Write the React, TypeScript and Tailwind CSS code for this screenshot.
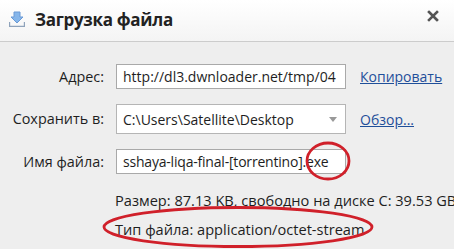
import React from "react";

export default function App() {
  const font = { fontFamily: '"Open Sans", "Noto Sans", sans-serif' };
  return (
    <div className="relative w-[454px] h-[249px] overflow-hidden bg-[#eeeeee] text-[#1e1e1e]" style={font}>
      <div className="h-[42px] flex items-center border-b border-[#cccccc] bg-gradient-to-b from-[#ffffff] to-[#f4f4f4]">
        <svg width="16" height="16" viewBox="0 0 16 16" className="ml-[9px] mt-[-4px]">
          <path d="M5 1h6v5h3l-6 6-6-6h3z" fill="#86b6ea" stroke="#6a9ad6" strokeWidth="1" />
          <path d="M0.5 11v4.5h15V11" fill="none" stroke="#8fa3bb" strokeWidth="1.4" />
        </svg>
        <div className="ml-[10px] mt-[-2px] text-[17px] font-bold text-[#222] tracking-[-0.3px]">Загрузка файла</div>
        <svg width="12" height="12" viewBox="0 0 12 12" className="ml-auto mr-[15px] mt-[-9px]">
          <path d="M2 2L10 10M10 2L2 10" stroke="#555" strokeWidth="2.6" strokeLinecap="square" />
        </svg>
      </div>
      <div className="grid grid-cols-[104px_230px_auto] gap-x-[12px] items-center pt-[22px] text-[14.4px]">
        <div className="text-right">Адрес:</div>
        <div className="h-[25px] bg-white border border-[#a9a9a9] flex items-center px-[6px] overflow-hidden whitespace-nowrap text-[14px]">http://dl3.dwnloader.net/tmp/04</div>
        <div className="ml-[2px] text-[#1f4f9a] underline text-[14px]">Копировать</div>

        <div className="text-right mt-[15px]">Сохранить в:</div>
        <div className="mt-[15px] h-[30px] bg-white border border-[#b5b5b5] flex items-center pl-[6px] pr-[8px] whitespace-nowrap text-[14px]">
          <span className="flex-1">C:\Users\Satellite\Desktop</span>
          <svg width="8" height="5" viewBox="0 0 8 5"><path d="M0 0h8L4 5z" fill="#999" /></svg>
        </div>
        <div className="mt-[15px] ml-[2px] text-[#1f4f9a] underline text-[14px]">Обзор...</div>

        <div className="text-right mt-[15px]">Имя файла:</div>
        <div className="mt-[15px] h-[25px] bg-white border border-[#a9a9a9] flex items-center px-[6px] overflow-hidden whitespace-nowrap text-[14px] tracking-[-0.2px]">sshaya-liqa-final-[torrentino].exe</div>
        <div />
      </div>
      <div className="pl-[115px] mt-[16px] text-[14.6px] whitespace-nowrap leading-[20px]">Размер: 87.13 KB, свободно на диске C: 39.53 GB</div>
      <div className="pl-[115px] mt-[9px] text-[14.6px] whitespace-nowrap leading-[20px]">Тип файла: application/octet-stream</div>
      <svg className="absolute left-0 top-0 pointer-events-none" width="454" height="249">
        <ellipse cx="328" cy="161" rx="21" ry="18" fill="none" stroke="#d0202a" strokeWidth="2.8" />
        <ellipse cx="238" cy="227" rx="134" ry="19.5" fill="none" stroke="#d0202a" strokeWidth="2.8" />
      </svg>
    </div>
  );
}
